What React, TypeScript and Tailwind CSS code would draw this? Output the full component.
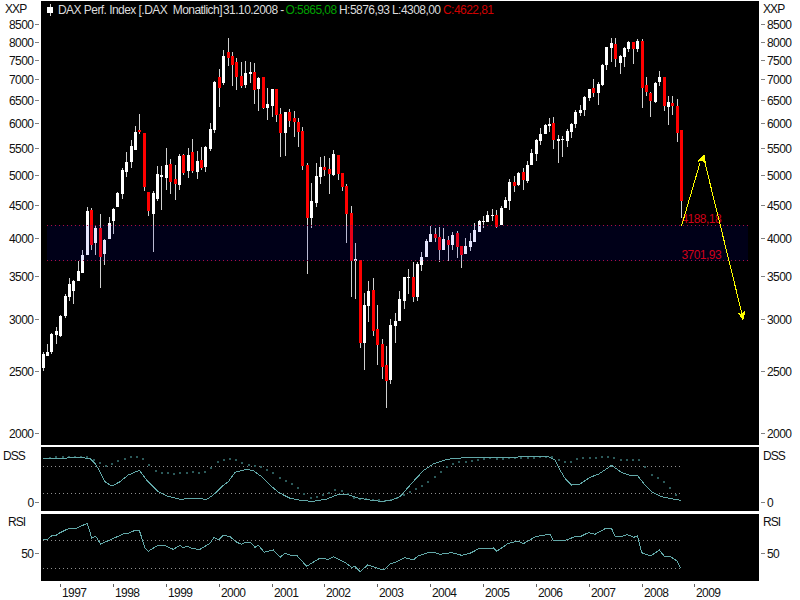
const C: number[][] = [
[43,352,371,354,368,0],[47,344,356,352,356,0],[51,333,354,334,352,0],[56,327,344,331,335,0],[60,315,337,316,336,0],[65,294,318,296,316,0],[69,278,301,284,297,0],[73,280,304,281,291,0],[78,261,281,271,281,0],[82,250,273,255,273,0],
[87,207,255,211,255,0],[91,208,250,210,245,1],[95,226,255,228,243,0],[100,214,288,228,257,1],[104,239,265,240,254,0],[109,217,239,223,239,0],[113,208,234,209,221,0],[117,192,207,193,207,0],[122,168,199,170,194,0],[126,152,177,162,172,0],
[131,140,168,146,162,0],[135,126,150,132,150,0],[139,114,134,130,132,1],[144,133,191,133,187,1],[148,192,216,192,211,1],[153,191,252,193,214,0],[157,166,201,174,199,0],[161,166,210,175,177,0],[166,148,190,165,178,0],[170,159,194,164,182,1],
[175,165,200,179,184,1],[179,154,190,156,185,0],[183,154,175,155,173,1],[188,148,178,155,171,0],[192,139,173,152,171,1],[197,151,179,161,172,0],[201,147,170,160,168,1],[205,146,172,147,167,0],[210,123,151,129,149,0],[214,81,133,82,130,0],
[219,69,107,77,88,1],[223,50,85,56,83,0],[228,38,66,52,58,1],[232,52,86,56,65,1],[236,58,90,62,77,1],[241,62,88,76,86,1],[245,61,88,73,85,0],[250,62,83,72,74,0],[254,63,104,72,90,1],[258,77,111,78,89,0],
[263,77,109,77,108,1],[267,88,120,104,108,0],[272,89,117,89,106,0],[276,89,122,89,115,1],[280,108,157,114,133,1],[285,112,156,112,133,0],[289,109,127,112,121,1],[294,111,137,118,122,1],[298,118,147,122,132,1],[302,127,170,131,166,1],
[307,163,274,165,218,1],[311,183,228,201,218,0],[316,163,207,176,203,0],[320,157,184,167,177,0],[324,156,176,167,170,1],[329,158,194,169,174,1],[333,150,176,154,175,0],[338,155,180,155,174,1],[342,173,191,173,187,1],[346,184,243,186,214,1],
[351,206,297,213,261,1],[355,243,299,259,261,0],[360,260,348,260,343,1],[364,293,370,305,343,0],[368,281,322,291,306,0],[373,278,336,290,331,1],[377,305,365,329,345,1],[382,339,379,344,367,1],[386,346,408,365,381,1],[390,319,384,325,380,0],
[395,313,343,321,326,0],[399,291,321,299,321,0],[404,277,309,277,301,0],[408,269,294,277,278,0],[413,262,302,277,297,1],[417,262,301,264,297,0],[421,252,271,257,265,0],[426,239,257,241,257,0],[430,226,242,234,242,0],[435,228,242,234,238,1],
[439,227,262,237,250,1],[443,228,250,239,250,0],[448,236,261,240,245,1],[452,232,250,235,245,0],[457,231,258,233,247,1],[461,246,268,246,255,1],[465,238,254,246,254,0],[470,233,251,241,247,0],[474,223,242,230,242,0],[479,220,232,221,232,0],
[483,216,228,221,222,0],[487,211,222,215,222,0],[492,209,221,215,216,0],[496,210,228,215,227,1],[501,206,225,208,225,0],[505,197,208,200,208,0],[509,179,210,182,201,0],[514,176,192,182,186,1],[518,172,186,173,185,0],[523,168,190,172,180,1],
[527,161,183,165,181,0],[531,149,165,153,165,0],[536,139,161,140,154,0],[540,128,145,134,141,0],[545,124,134,125,134,0],[549,118,132,124,126,0],[553,117,149,123,140,1],[558,135,163,139,141,0],[562,136,157,139,140,0],[567,129,147,131,141,0],
[571,123,138,124,132,0],[575,110,128,112,124,0],[580,105,116,110,113,0],[584,96,116,97,110,0],[589,89,101,89,98,0],[593,79,97,88,93,1],[598,82,105,84,93,0],[602,64,86,65,85,0],[606,47,70,47,65,0],[611,38,62,43,48,0],
[615,38,67,44,59,1],[620,55,74,56,63,0],[624,47,67,48,57,0],[628,41,52,42,49,0],[633,42,64,42,49,1],[637,39,52,41,49,0],[642,39,108,41,88,1],[646,77,96,85,92,1],[650,92,117,93,101,1],[655,82,103,83,102,0],
[659,71,86,77,82,0],[664,77,111,77,106,1],[668,96,125,102,107,0],[672,96,115,103,106,1],[677,99,142,106,133,1],[681,130,218,130,201,1],
];

const z = (ox: number, s: string) =>
  s.trim().split(/\s+/).map((p) => {
    const [a, b] = p.split(",").map(Number);
    return [ox + a / 3, 440 + b / 3];
  });

const DSS = [
  ...z(0, "130,57 190,56 215,51 240,52 270,56 285,70 300,95 315,125 330,135 340,136 360,125 385,105 418,91 440,120 475,155 500,168 540,178 580,175 620,178 640,165 665,140 685,125 705,97 740,88 760,92 785,110 810,135"),
  ...z(270, "25,157 60,175 100,182 130,184 170,177 200,165 230,162 260,173 300,180 330,184 360,182 390,170 425,130 460,92 490,72 530,58 595,52 700,52 790,50"),
  ...z(530, "55,50 75,60 90,90 105,115 125,135 150,132 180,112 205,103 245,76 275,98 300,106 322,106 345,135 365,155 395,170 430,177 452,181"),
];
const SIG = [
  ...z(0, "130,53 260,50 295,70 315,77 335,72 355,62 370,57 390,50 415,50 432,62 460,90 480,98 520,102 540,98 580,97 600,100 620,95 635,82 650,67 670,58 690,57 710,62 730,72 770,78 790,85"),
  ...z(270, "15,103 30,118 50,125 70,134 85,148 100,163 118,175 135,173 155,164 175,158 195,150 215,153 235,165 250,175 270,178 290,177 310,180 350,182 370,178 390,168 410,158 428,150 448,142 465,132 483,118 500,105 515,90 530,80 550,70 570,66 590,65 610,60 632,57 652,55 672,56 692,56 735,53 760,55"),
  ...z(530, "15,52 35,52 60,51 80,58 100,65 120,65 137,56 160,53 180,53 200,53 220,52 240,50 260,60 280,60 300,60 322,58 338,72 350,90 363,107 380,115 400,125 415,140 427,157 444,170"),
];
const RSI = [
  ...z(0, "130,299 142,299 155,287 168,286 180,278 205,266 230,264 262,250 275,294 287,289 302,312 345,293 370,282 385,280 405,271 418,271 435,323 445,334 470,318 495,317 520,328 540,316 550,324 562,318 578,326 600,328 630,310 642,292 655,300 670,286 690,290 710,307 725,313 735,308 752,308 765,322 775,316 793,337 810,332"),
  ...z(270, "10,330 30,352 45,340 60,345 80,346 110,379 150,354 175,358 190,350 225,367 245,382 255,379 270,395 293,375 330,387 345,388 360,372 380,365 405,353 430,360 445,347 475,338 495,338 510,343 545,338 575,346 600,340 625,327 670,324 680,334 715,310 745,303 760,311 795,291"),
  ...z(530, "0,298 20,289 60,283 70,302 100,303 135,290 150,290 175,278 195,283 225,266 245,266 255,289 275,289 292,284 312,292 322,287 335,338 362,348 388,330 405,351 420,349 440,362 452,384"),
];
const pts = (a: number[][]) => a.map((p) => `${p[0].toFixed(1)},${p[1].toFixed(1)}`).join(" ");

function sample(a: number[][]) {
  const out: number[][] = [];
  for (let x = 43; x <= 679; x += 6.2) {
    for (let i = 0; i < a.length - 1; i++) {
      if (x >= a[i][0] && x <= a[i + 1][0]) {
        const t = (x - a[i][0]) / (a[i + 1][0] - a[i][0] || 1);
        out.push([Math.round(x), Math.round(a[i][1] + t * (a[i + 1][1] - a[i][1]))]);
        break;
      }
    }
  }
  return out;
}

const PRICE: [string, number][] = [
  ["8500", 24.5], ["8000", 42.5], ["7500", 60.5], ["7000", 79.5], ["6500", 100.5], ["6000", 123.5], ["5500", 148.5],
  ["5000", 175.5], ["4500", 205.5], ["4000", 238.5], ["3500", 276.5], ["3000", 319.5], ["2500", 371.5], ["2000", 433.5],
];
const YEARS: [string, number][] = [
  ["1997", 60], ["1998", 113], ["1999", 166], ["2000", 219], ["2001", 272], ["2002", 324], ["2003", 377],
  ["2004", 430], ["2005", 483], ["2006", 536], ["2007", 589], ["2008", 642], ["2009", 694],
];

function Axis({ side, top, height, title, titleY, titleX, ticks }: {
  side: "l" | "r"; top: number; height: number; title: string; titleY: number; titleX: number; ticks: [string, number][];
}) {
  const left = side === "l";
  const ox = left ? 0 : 759;
  return (
    <svg className="block shrink-0 w-[41px] tracking-[-0.55px]" style={{ height }} viewBox={`${ox} ${top} 41 ${height}`} fill="#101010" fontSize="12">
      <text x={titleX} y={titleY} className="tracking-[-0.9px]">{title}</text>
      {ticks.map(([t, y]) => (
        <g key={t}>
          <rect x={left ? 35 : 761} y={Math.floor(y)} width="4" height="1" fill="#808080" />
          <text x={left ? 33.5 : 767} y={Math.floor(y) + 4.5} textAnchor={left ? "end" : "start"}>{t}</text>
        </g>
      ))}
    </svg>
  );
}

function Dotted({ y, color, x1 = 43, x2 = 681 }: { y: number; color: string; x1?: number; x2?: number }) {
  return <line x1={x1} x2={x2} y1={y + 0.5} y2={y + 0.5} stroke={color} strokeDasharray="1 3" />;
}

function Price() {
  return (
    <svg className="block w-[718px] h-[444px] bg-black tracking-[-0.55px]" viewBox="41 1 718 444" shapeRendering="crispEdges">
      <g fill="#d0d0d0">
        {C.map((c) => <rect key={c[0]} x={c[0]} y={c[1]} width="1" height={c[2] - c[1]} />)}
      </g>
      {C.map((c) => (
        <rect key={c[0]} x={c[0] - 1} y={c[3]} width="3" height={Math.max(1, c[4] - c[3])} fill={c[5] ? "#ff0000" : "#ffffff"} />
      ))}
      <rect x="47" y="225" width="701" height="36" fill="#0000f0" fillOpacity="0.1" />
      <Dotted y={225} color="#b01040" x1={47} x2={748} />
      <Dotted y={260} color="#b01040" x1={47} x2={748} />
      <rect x="50" y="4" width="1" height="12" fill="#d0d0d0" />
      <rect x="47" y="7" width="6" height="6" fill="#ffffff" />
      <text y="14" fontSize="12" fill="#dcdcdc" xmlSpace="preserve" shapeRendering="auto">
        <tspan x="58">DAX Perf. Index [.DAX  Monatlich]</tspan>
        <tspan x="223">31.10.2008 -</tspan>
        <tspan x="285.5" fill="#00a000">O:5865,08</tspan>
        <tspan x="339">H:5876,93</tspan>
        <tspan x="392">L:4308,00</tspan>
        <tspan x="443" fill="#d00000">C:4622,81</tspan>
      </text>
      <text x="681.5" y="223" fontSize="12" fill="#d00018" shapeRendering="auto">4188,18</text>
      <text x="681.5" y="258.5" fontSize="12" fill="#d00018" shapeRendering="auto">3701,93</text>
      <g stroke="#ffff00" fill="none">
        <polyline points="681.5,226 700,163" />
        <polyline points="705,163 743,318" />
      </g>
      <g fill="#ffff00">
        <polygon points="704.3,153.7 706,164 702,160.5 696.7,162.5" />
        <polygon points="743.2,320.5 737.3,312 741,314 745.7,309.7" />
      </g>
    </svg>
  );
}

function Dss() {
  return (
    <svg className="block w-[718px] h-[64px] bg-black" viewBox="41 447 718 64" shapeRendering="crispEdges">
      <Dotted y={466} color="#909090" />
      <Dotted y={493} color="#909090" />
      {sample(SIG).map((p) => <rect key={p[0]} x={p[0]} y={p[1] - 1} width="2" height="2" fill="#2c5a5a" />)}
      <polyline points={pts(DSS)} fill="none" stroke="#62a8a8" />
    </svg>
  );
}

function Rsi() {
  return (
    <svg className="block w-[718px] h-[67px] bg-black" viewBox="41 514 718 67" shapeRendering="crispEdges">
      <Dotted y={540} color="#909090" />
      <Dotted y={568} color="#909090" />
      <polyline points={pts(RSI)} fill="none" stroke="#62a8a8" />
    </svg>
  );
}

export default function App() {
  return (
    <div className="w-[800px] h-[600px] bg-white flex flex-col overflow-hidden font-['Liberation_Sans',Arial,sans-serif]">
      <div className="flex mt-px">
        <Axis side="l" top={1} height={444} title="XXP" titleX={5} titleY={13} ticks={PRICE} />
        <Price />
        <Axis side="r" top={1} height={444} title="XXP" titleX={763} titleY={13} ticks={PRICE} />
      </div>
      <div className="flex mt-[2px]">
        <Axis side="l" top={447} height={64} title="DSS" titleX={3} titleY={460} ticks={[["0", 502.5]]} />
        <Dss />
        <Axis side="r" top={447} height={64} title="DSS" titleX={763} titleY={460} ticks={[["0", 502.5]]} />
      </div>
      <div className="flex mt-[3px]">
        <Axis side="l" top={514} height={67} title="RSI" titleX={8} titleY={526} ticks={[["50", 553.5]]} />
        <Rsi />
        <Axis side="r" top={514} height={67} title="RSI" titleX={763} titleY={526} ticks={[["50", 553.5]]} />
      </div>
      <svg className="block w-[800px] h-[19px] tracking-[-0.55px]" viewBox="0 581 800 19" fill="#101010" fontSize="12">
        {YEARS.map(([t, x]) => (
          <g key={t}>
            <rect x={x} y="584" width="1" height="3" fill="#606060" />
            <text x={x + 2} y="597">{t}</text>
          </g>
        ))}
      </svg>
    </div>
  );
}
